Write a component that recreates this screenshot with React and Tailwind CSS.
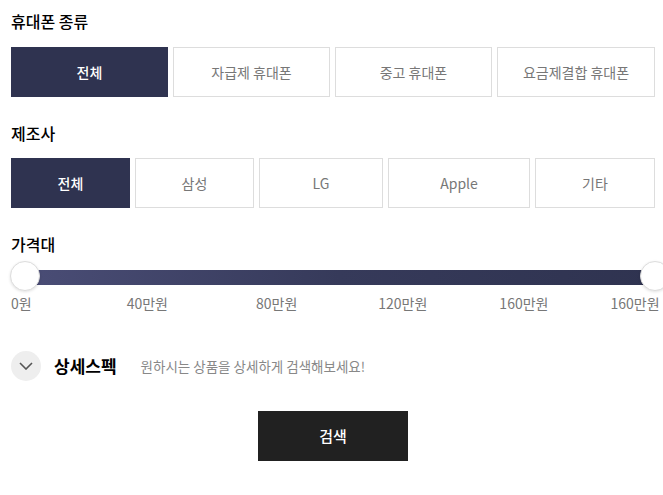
import React from 'react';

const font = { fontFamily: '"Noto Sans CJK KR", "Noto Sans", sans-serif' };

const types = [
  ['전체', 'w-[157px]'],
  ['자급제 휴대폰', 'w-[157px]'],
  ['중고 휴대폰', 'w-[157px]'],
  ['요금제결합 휴대폰', 'w-[158px]'],
];
const makers = [
  ['전체', 'w-[119px]'],
  ['삼성', 'w-[119px]'],
  ['LG', 'w-[124px]'],
  ['Apple', 'w-[142px]'],
  ['기타', 'w-[120px]'],
];

function OptionButton({ label, active, className }) {
  return (
    <button
      className={
        'h-[50px] border text-[14px] ' +
        (active
          ? 'bg-[#2f3350] border-[#2f3350] text-white font-medium'
          : 'bg-white border-[#dddddd] text-[#777777]') +
        ' ' +
        className
      }
    >
      {label}
    </button>
  );
}

export default function App() {
  return (
    <div className="w-[663px] h-[495px] overflow-hidden bg-white pl-[11px] pt-[9px]" style={font}>
      <div className="w-[644px]">
        <h2 className="text-[16px] leading-[24px] font-medium text-black">휴대폰 종류</h2>
        <div className="mt-[14px] flex gap-[5px]">
          {types.map(([t, w], i) => (
            <OptionButton key={t} label={t} active={i === 0} className={w} />
          ))}
        </div>

        <h2 className="mt-[24px] text-[16px] leading-[24px] font-medium text-black">제조사</h2>
        <div className="mt-[13px] flex gap-[5px]">
          {makers.map(([t, w], i) => (
            <OptionButton key={t} label={t} active={i === 0} className={w} />
          ))}
        </div>

        <h2 className="mt-[24px] text-[16px] leading-[24px] font-medium text-black">가격대</h2>
        <div className="relative mt-[5px] h-[30px] w-[659px] -ml-[1px]">
          <div className="absolute left-[14px] right-[14px] top-[9px] h-[15px] bg-gradient-to-r from-[#4a4d76] via-[#363a5a] to-[#2f3350]" />
          <div className="absolute left-0 top-0 h-[30px] w-[30px] rounded-full bg-white border border-[#dddddd] shadow-[0_1px_3px_rgba(0,0,0,0.12)]" />
          <div className="absolute right-[-1px] top-0 h-[30px] w-[30px] rounded-full bg-white border border-[#dddddd] shadow-[0_1px_3px_rgba(0,0,0,0.12)]" />
        </div>
        <div className="mt-[1px] flex text-[14px] leading-[22px] text-[#777777] whitespace-nowrap">
          <span>0원</span>
          <span className="ml-[95px]">40만원</span>
          <span className="ml-[88px]">80만원</span>
          <span className="ml-[81px]">120만원</span>
          <span className="ml-[72px]">160만원</span>
          <span className="ml-[62px]">160만원</span>
        </div>

        <div className="mt-[37px] flex items-center">
          <div className="h-[30px] w-[30px] rounded-full bg-[#eeeeee] flex items-center justify-center">
            <svg width="14" height="8" viewBox="0 0 14 8" fill="none">
              <path d="M1 1l6 6 6-6" stroke="#555555" strokeWidth="1.6" />
            </svg>
          </div>
          <span className="ml-[13px] text-[17px] font-bold text-black">상세스펙</span>
          <span className="ml-[24px] text-[13.5px] text-[#888888]">원하시는 상품을 상세하게 검색해보세요!</span>
        </div>

        <div className="mt-[30px] flex justify-center">
          <button className="h-[50px] w-[150px] bg-[#212121] text-white text-[15px] font-medium">검색</button>
        </div>
      </div>
    </div>
  );
}
